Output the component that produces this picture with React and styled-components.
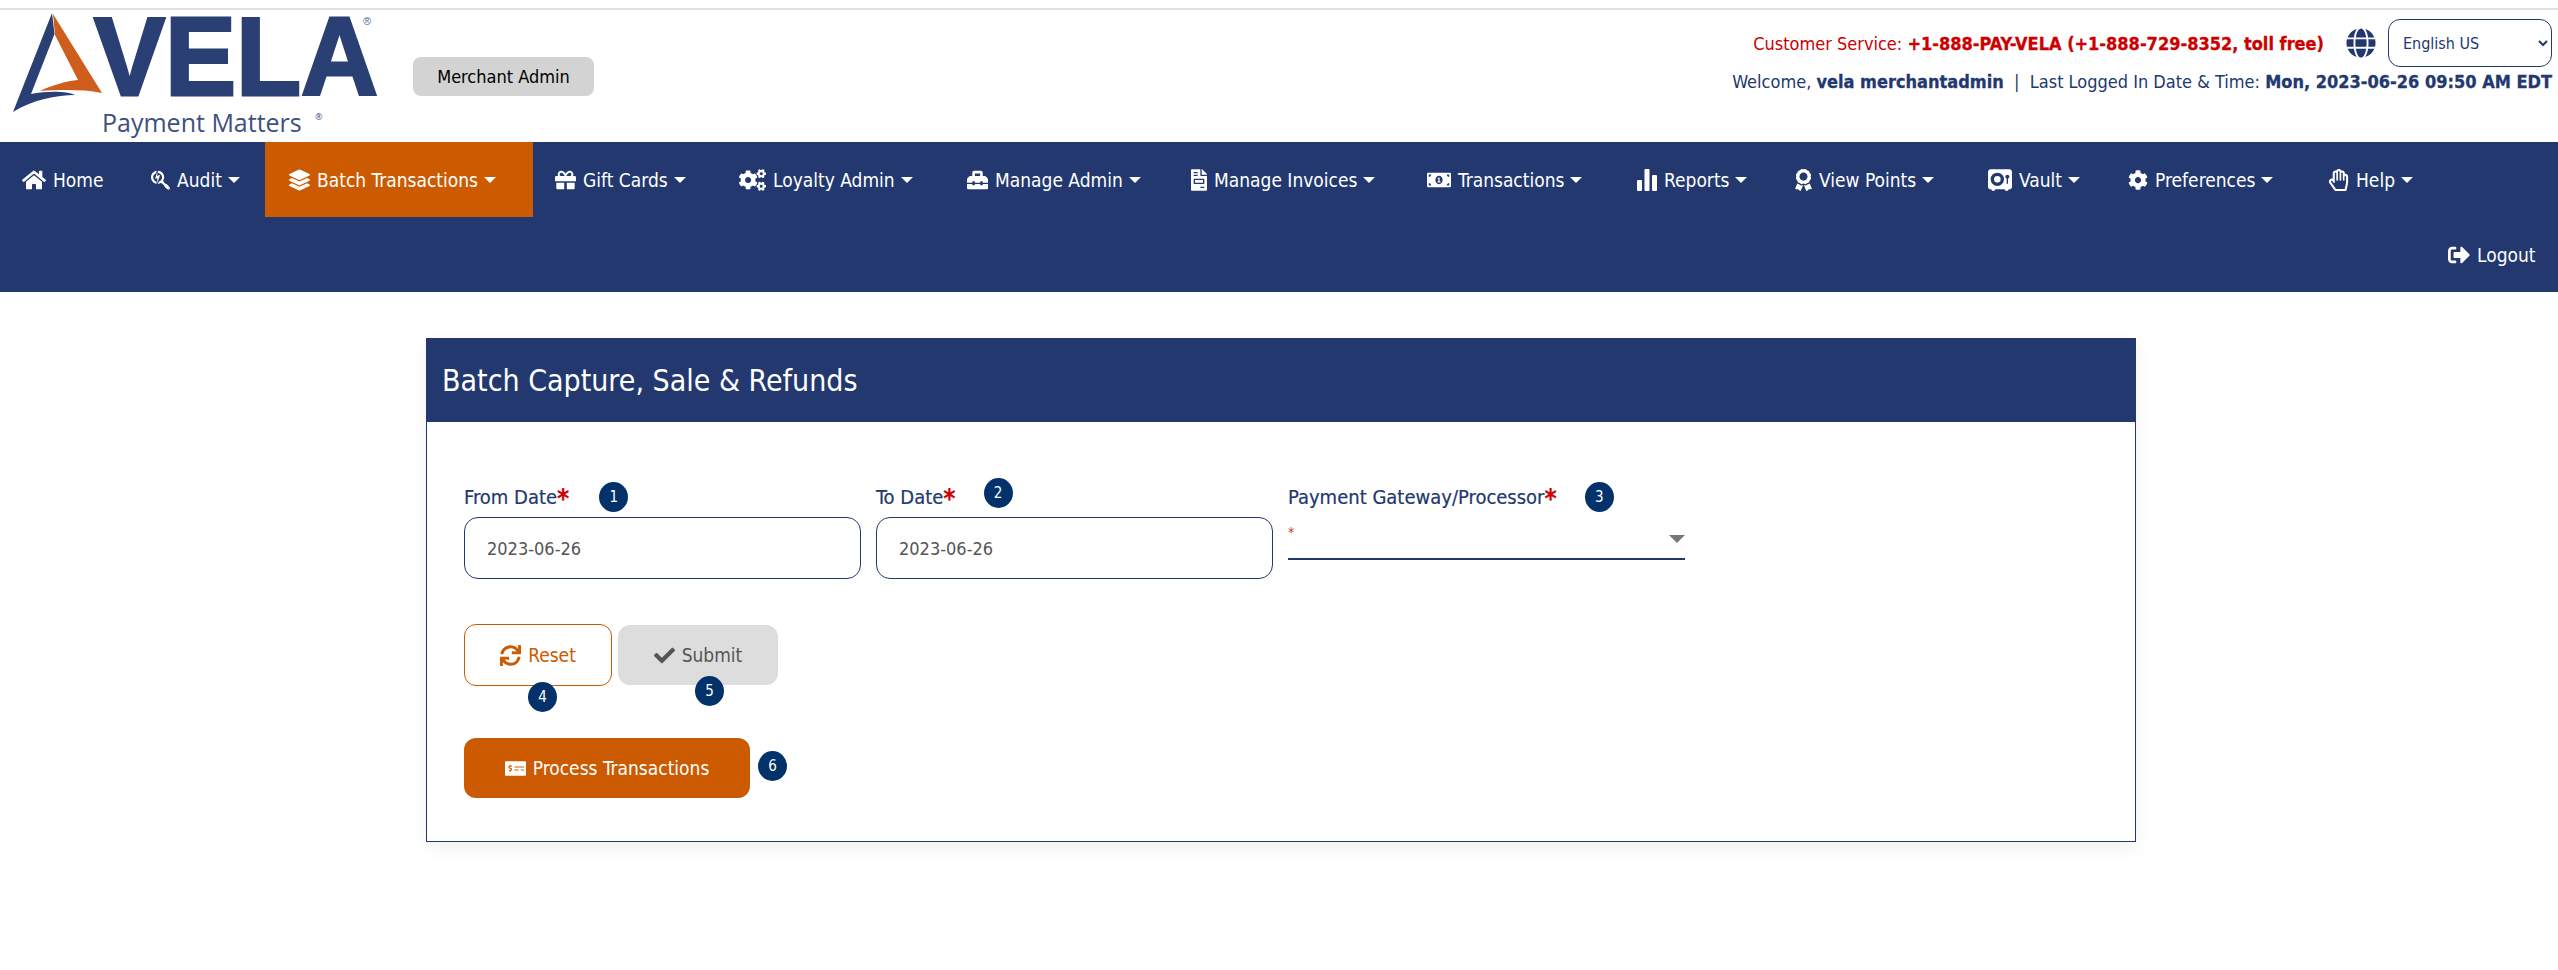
import styled, { createGlobalStyle } from "styled-components";
import {
  FaHome,
  FaSearchengin,
  FaLayerGroup,
  FaGift,
  FaCogs,
  FaToolbox,
  FaFileInvoice,
  FaMoneyBillAlt,
  FaAward,
  FaCog,
  FaRegHandPaper,
  FaSignOutAlt,
  FaGlobe,
  FaSync,
  FaCheck,
  FaMoneyCheckAlt,
} from "react-icons/fa";
import { FaVault } from "react-icons/fa6";

const navy = "#22386f";
const orange = "#cc5a00";
const fontStack = `"DejaVu Sans Condensed", "DejaVu Sans", sans-serif`;

const GlobalStyle = createGlobalStyle`
  html, body {
    margin: 0;
    padding: 0;
    background: #fff;
    font-family: ${fontStack};
  }
  * { box-sizing: border-box; }
`;

const Page = styled.div`
  width: 2558px;
  height: 970px;
  overflow: hidden;
  padding-top: 8px;
`;

const Header = styled.header`
  height: 134px;
  border-top: 2px solid #e0e0e0;
  display: flex;
  justify-content: space-between;
  padding: 0 6px 0 12px;
`;

const Brand = styled.div`
  display: flex;
  align-items: flex-start;
`;

const Logo = styled.svg`
  width: 372px;
  height: 132px;
  display: block;
`;

const RoleBadge = styled.div`
  margin: 47px 0 0 29px;
  width: 181px;
  height: 39px;
  border-radius: 8px;
  background: #d3d3d3;
  color: #000;
  font-size: 18px;
  display: flex;
  align-items: center;
  justify-content: center;
`;

const HeaderInfo = styled.div`
  display: flex;
  flex-direction: column;
  align-items: flex-end;
  padding-top: 9px;
`;

const ServiceRow = styled.div`
  height: 48px;
  display: flex;
  align-items: center;
  color: #cc0000;
  font-size: 18px;
`;

const Strong = styled.span`
  font-weight: ${({ $weight }) => $weight || 600};
  -webkit-text-stroke: 0.3px currentColor;
`;

const Globe = styled(FaGlobe)`
  width: 30px;
  height: 30px;
  color: ${navy};
  margin: 0 12px 0 22px;
`;

const LangSelect = styled.select`
  width: 164px;
  height: 48px;
  padding: 0 8px 0 10px;
  border: 1px solid ${navy};
  border-radius: 12px;
  background: #fff;
  color: ${navy};
  font-family: ${fontStack};
  font-size: 16px;
`;

const WelcomeRow = styled.div`
  margin-top: 4px;
  color: ${navy};
  font-size: 18px;
  white-space: pre;
`;

const Nav = styled.nav`
  height: 150px;
  background: ${navy};
`;

const NavRow = styled.div`
  height: 75px;
  display: flex;
  justify-content: ${({ $end }) => ($end ? "flex-end" : "flex-start")};
  padding-left: ${({ $end }) => ($end ? "0" : "4px")};
  padding-right: ${({ $end }) => ($end ? "0" : "0")};
`;

const NavItem = styled.a`
  width: ${({ $width }) => $width}px;
  height: 75px;
  padding-left: ${({ $pad }) => $pad}px;
  display: flex;
  align-items: center;
  flex: none;
  color: #fff;
  font-size: 19px;
  white-space: nowrap;
  background: ${({ $active }) => ($active ? orange : "transparent")};

  svg {
    width: ${({ $icon }) => $icon}px;
    height: 22px;
    margin-right: 7px;
    flex: none;
  }
`;

const Caret = styled.span`
  width: 0;
  height: 0;
  margin-left: 6px;
  border-left: 6px solid transparent;
  border-right: 6px solid transparent;
  border-top: 6px solid #fff;
`;

const Main = styled.main`
  display: flex;
  padding: 46px 0 0 426px;
`;

const Card = styled.section`
  width: 1710px;
  height: 504px;
  border: 1px solid ${navy};
  box-shadow: 0 6px 16px rgba(0, 0, 0, 0.06);
`;

const CardHeader = styled.h1`
  margin: 0;
  height: 83px;
  padding-left: 15px;
  background: ${navy};
  color: #fff;
  font-size: 30px;
  font-weight: 400;
  display: flex;
  align-items: center;
`;

const CardBody = styled.div`
  padding: 55px 0 0 37px;
`;

const FieldRow = styled.div`
  display: flex;
`;

const Field = styled.div`
  width: 412px;
`;

const LabelRow = styled.div`
  height: 40px;
  display: flex;
  align-items: center;
  color: ${navy};
  font-size: 20px;
  font-weight: 500;
  -webkit-text-stroke: 0.2px currentColor;
`;

const Star = styled.span`
  color: #d00000;
  font-size: 26px;
  font-weight: 700;
  height: 30px;
  line-height: 34px;
`;

const Badge = styled.span`
  width: 29px;
  height: 30px;
  border-radius: 50%;
  background: #03326a;
  color: #fff;
  font-size: 15px;
  font-weight: 400;
  -webkit-text-stroke: 0;
  display: flex;
  align-items: center;
  justify-content: center;
  flex: none;
`;

const LabelBadge = styled(Badge)`
  margin-left: ${({ $left }) => $left}px;
  margin-top: ${({ $top }) => $top || 0}px;
`;

const ButtonBadge = styled(Badge)`
  position: absolute;
  left: ${({ $left }) => $left}px;
  top: ${({ $top }) => $top}px;
`;

const DateInput = styled.input`
  width: 397px;
  height: 62px;
  padding: 0 22px;
  border: 1px solid ${navy};
  border-radius: 14px;
  color: #555;
  font-family: ${fontStack};
  font-size: 18px;
`;

const GatewaySelect = styled.div`
  width: 397px;
  height: 43px;
  border-bottom: 2px solid ${navy};
  position: relative;
  color: #c0392b;
  font-size: 14px;
  line-height: 30px;
`;

const SelectArrow = styled.span`
  position: absolute;
  right: 0;
  top: 18px;
  width: 0;
  height: 0;
  border-left: 8px solid transparent;
  border-right: 8px solid transparent;
  border-top: 8px solid #777;
`;

const Actions = styled.div`
  margin-top: 45px;
  display: flex;
  align-items: center;
  gap: 6px;
  position: relative;
`;

const Button = styled.button`
  height: ${({ $height }) => $height}px;
  width: ${({ $width }) => $width}px;
  border: 1px solid ${({ $variant }) => ($variant === "outline" ? orange : "transparent")};
  border-radius: 12px;
  background: ${({ $variant }) =>
    $variant === "outline" ? "#fff" : $variant === "muted" ? "#ddd" : orange};
  color: ${({ $variant }) =>
    $variant === "outline" ? orange : $variant === "muted" ? "#555" : "#fff"};
  font-family: ${fontStack};
  font-size: 19px;
  display: flex;
  align-items: center;
  justify-content: center;
  gap: 7px;
  padding: 0;

  svg {
    width: 21px;
    height: 21px;
  }
`;

const ProcessRow = styled.div`
  margin-top: 52px;
  display: flex;
  align-items: center;
`;

const navItems = [
  { label: "Home", Icon: FaHome, width: 129, pad: 18, icon: 24, caret: false },
  { label: "Audit", Icon: FaSearchengin, width: 132, pad: 18, icon: 19 },
  { label: "Batch Transactions", Icon: FaLayerGroup, width: 268, pad: 24, icon: 21, active: true },
  { label: "Gift Cards", Icon: FaGift, width: 184, pad: 22, icon: 21 },
  { label: "Loyalty Admin", Icon: FaCogs, width: 228, pad: 22, icon: 27 },
  { label: "Manage Admin", Icon: FaToolbox, width: 224, pad: 22, icon: 21 },
  { label: "Manage Invoices", Icon: FaFileInvoice, width: 236, pad: 22, icon: 16 },
  { label: "Transactions", Icon: FaMoneyBillAlt, width: 210, pad: 22, icon: 24 },
  { label: "Reports", Icon: ReportsIcon, width: 158, pad: 22, icon: 20 },
  { label: "View Points", Icon: FaAward, width: 193, pad: 22, icon: 17 },
  { label: "Vault", Icon: FaVault, width: 140, pad: 22, icon: 24 },
  { label: "Preferences", Icon: FaCog, width: 200, pad: 22, icon: 20 },
  { label: "Help", Icon: FaRegHandPaper, width: 120, pad: 22, icon: 21 },
];

function ReportsIcon(props) {
  return (
    <svg viewBox="0 0 20 22" fill="currentColor" {...props}>
      <rect x="0" y="11" width="5" height="11" rx="1" />
      <rect x="7.5" y="0" width="5" height="22" rx="1" />
      <rect x="15" y="6" width="5" height="16" rx="1" />
    </svg>
  );
}

const VelaLogo = () => (
  <Logo viewBox="0 0 372 132">
    <path
      d="M40 3 L42.5 24 L19 84 C35 81 55 81 63 85 C45 85 20 90 1 102 Z"
      fill="#2a3f73"
    />
    <path
      d="M41 4 L90 83 C70 79 45 80 28 81 C40 75 55 71 66 70 L43 25 Z"
      fill="#cf5d1c"
    />
    <text
      x="82"
      y="85"
      fontFamily="Liberation Sans, sans-serif"
      fontWeight="700"
      fontSize="112"
      textLength="284"
      lengthAdjust="spacingAndGlyphs"
      fill="#2a3f73"
      stroke="#2a3f73"
      strokeWidth="3"
    >
      VELA
    </text>
    <text x="351" y="15" fontFamily="Liberation Sans, sans-serif" fontSize="11" fill="#5a6a94">
      ®
    </text>
    <text x="90" y="122" fontFamily="Open Sans, sans-serif" fontSize="25" fill="#3d5080">
      Payment Matters
    </text>
    <text x="303" y="110" fontFamily="Open Sans, sans-serif" fontSize="9" fill="#3d5080">
      ®
    </text>
  </Logo>
);

const App = () => {
  return (
    <Page>
      <GlobalStyle />
      <Header>
        <Brand>
          <VelaLogo />
          <RoleBadge>Merchant Admin</RoleBadge>
        </Brand>
        <HeaderInfo>
          <ServiceRow>
            <span>
              Customer Service: <Strong>+1-888-PAY-VELA (+1-888-729-8352, toll free)</Strong>
            </span>
            <Globe />
            <LangSelect defaultValue="en">
              <option value="en">English US</option>
            </LangSelect>
          </ServiceRow>
          <WelcomeRow>
            Welcome, <Strong>vela merchantadmin</Strong>{"  |  "}Last Logged In Date &amp; Time:{" "}
            <Strong>Mon, 2023-06-26 09:50 AM EDT</Strong>
          </WelcomeRow>
        </HeaderInfo>
      </Header>

      <Nav>
        <NavRow>
          {navItems.map(({ label, Icon, width, pad, icon, active, caret }) => (
            <NavItem key={label} $width={width} $pad={pad} $icon={icon} $active={active}>
              <Icon />
              {label}
              {caret !== false && <Caret />}
            </NavItem>
          ))}
        </NavRow>
        <NavRow $end>
          <NavItem $width={110} $pad={0} $icon={22}>
            <FaSignOutAlt />
            Logout
          </NavItem>
        </NavRow>
      </Nav>

      <Main>
        <Card>
          <CardHeader>Batch Capture, Sale &amp; Refunds</CardHeader>
          <CardBody>
            <FieldRow>
              <Field>
                <LabelRow>
                  From Date<Star>*</Star>
                  <LabelBadge $left={30}>1</LabelBadge>
                </LabelRow>
                <DateInput defaultValue="2023-06-26" />
              </Field>
              <Field>
                <LabelRow>
                  To Date<Star>*</Star>
                  <LabelBadge $left={28} $top={-8}>2</LabelBadge>
                </LabelRow>
                <DateInput defaultValue="2023-06-26" />
              </Field>
              <Field>
                <LabelRow>
                  Payment Gateway/Processor<Star>*</Star>
                  <LabelBadge $left={28}>3</LabelBadge>
                </LabelRow>
                <GatewaySelect>
                  *
                  <SelectArrow />
                </GatewaySelect>
              </Field>
            </FieldRow>

            <Actions>
              <Button $variant="outline" $width={148} $height={62}>
                <FaSync />
                Reset
              </Button>
              <Button $variant="muted" $width={160} $height={60}>
                <FaCheck />
                Submit
              </Button>
              <ButtonBadge $left={64} $top={58}>4</ButtonBadge>
              <ButtonBadge $left={231} $top={52}>5</ButtonBadge>
            </Actions>

            <ProcessRow>
              <Button $width={286} $height={60}>
                <FaMoneyCheckAlt />
                Process Transactions
              </Button>
              <LabelBadge $left={8} $top={-4}>6</LabelBadge>
            </ProcessRow>
          </CardBody>
        </Card>
      </Main>
    </Page>
  );
};

export default App;
